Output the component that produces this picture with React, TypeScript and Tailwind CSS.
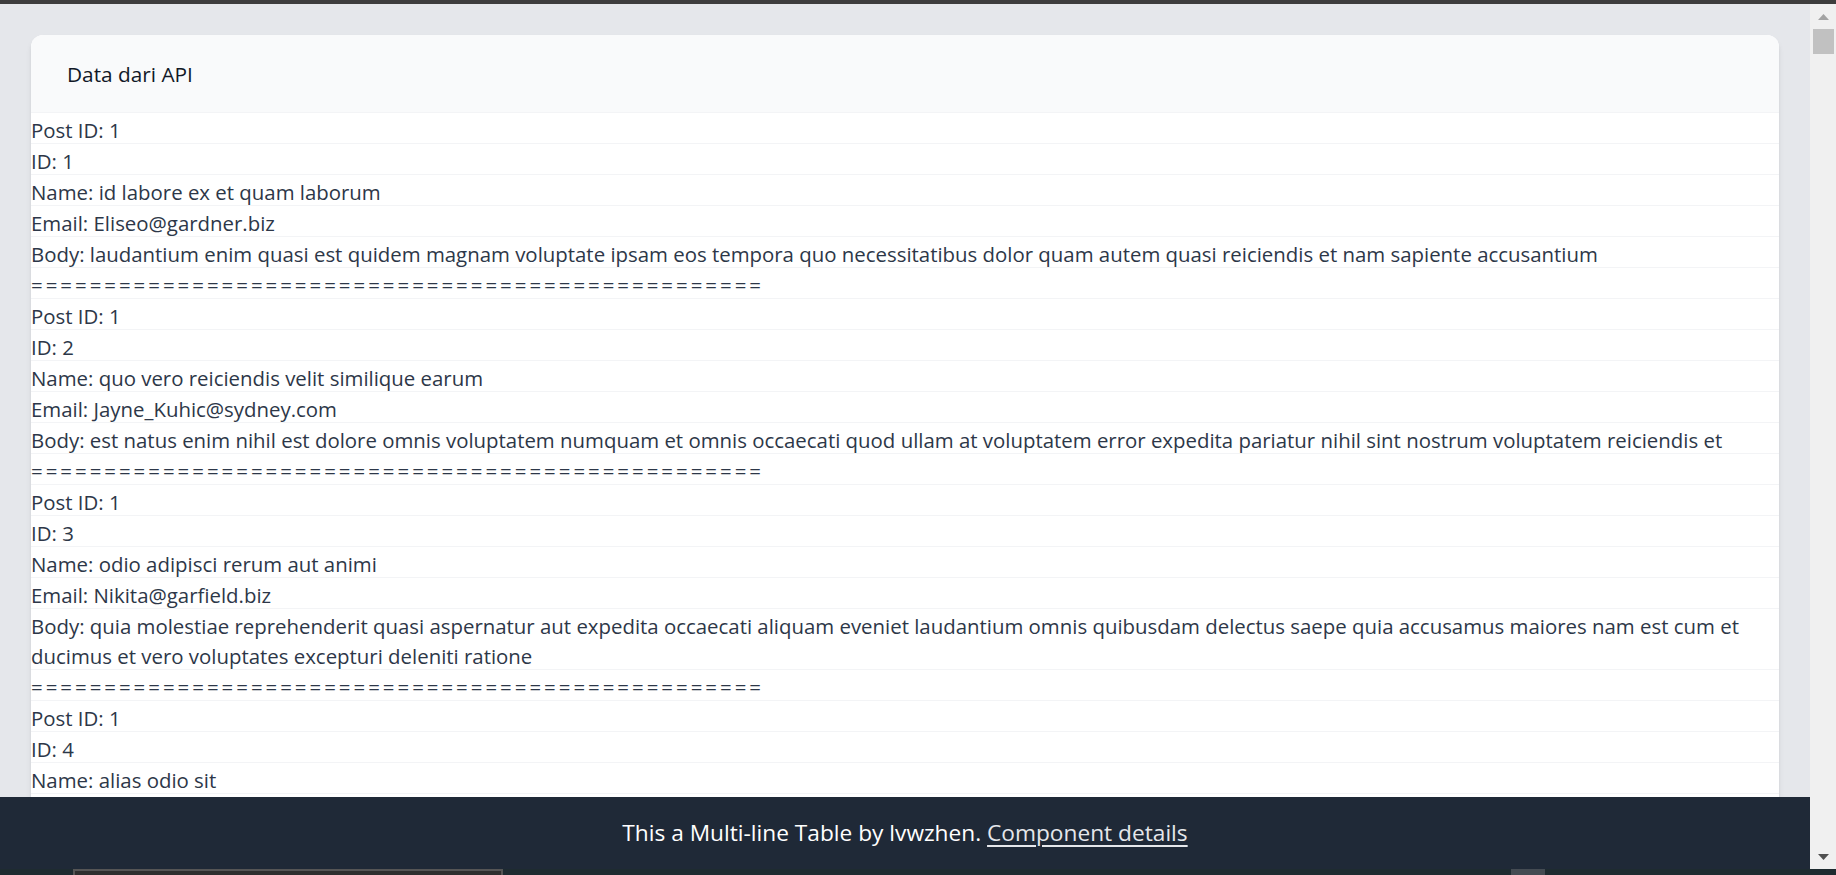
import React from "react";

interface Comment {
  postId: number;
  id: number;
  name: string;
  email: string;
  body: string;
}

const comments: Comment[] = [
  {
    postId: 1,
    id: 1,
    name: "id labore ex et quam laborum",
    email: "Eliseo@gardner.biz",
    body: "laudantium enim quasi est quidem magnam voluptate ipsam eos tempora quo necessitatibus dolor quam autem quasi reiciendis et nam sapiente accusantium",
  },
  {
    postId: 1,
    id: 2,
    name: "quo vero reiciendis velit similique earum",
    email: "Jayne_Kuhic@sydney.com",
    body: "est natus enim nihil est dolore omnis voluptatem numquam et omnis occaecati quod ullam at voluptatem error expedita pariatur nihil sint nostrum voluptatem reiciendis et",
  },
  {
    postId: 1,
    id: 3,
    name: "odio adipisci rerum aut animi",
    email: "Nikita@garfield.biz",
    body: "quia molestiae reprehenderit quasi aspernatur aut expedita occaecati aliquam eveniet laudantium omnis quibusdam delectus saepe quia accusamus maiores nam est cum et ducimus et vero voluptates excepturi deleniti ratione",
  },
  {
    postId: 1,
    id: 4,
    name: "alias odio sit",
    email: "Lew@alysha.tv",
    body: "non et atque occaecati deserunt quas accusantium unde odit nobis qui voluptatem quia voluptas consequuntur itaque dolor et qui rerum deleniti ut occaecati",
  },
  {
    postId: 1,
    id: 5,
    name: "vero eaque aliquid doloribus et culpa",
    email: "Hayden@althea.biz",
    body: "harum non quasi et ratione tempore iure ex voluptates in ratione harum architecto fugit inventore cupiditate voluptates magni quo et",
  },
];

const SEPARATOR = "=".repeat(50);

const Row = ({ children }: { children: React.ReactNode }) => (
  <div className="border-b border-[#f3f4f6] text-[20.4px] leading-[30px] text-[#2d3748]">
    <div className="translate-y-[2px]">{children}</div>
  </div>
);

const Scrollbar = () => (
  <div className="flex w-[26px] flex-col items-center bg-[#f0f0f0]">
    <div className="flex h-[25px] w-full items-center justify-center">
      <svg width="11" height="6" viewBox="0 0 11 6">
        <path d="M5.5 0 L11 6 L0 6 Z" fill="#a3a3a3" />
      </svg>
    </div>
    <div className="h-[25px] w-[21px] bg-[#c1c1c1]" />
    <div className="flex-1" />
    <div className="flex h-[25px] w-full items-center justify-center">
      <svg width="11" height="6" viewBox="0 0 11 6">
        <path d="M0 0 L11 0 L5.5 6 Z" fill="#505050" />
      </svg>
    </div>
  </div>
);

export default function App() {
  return (
    <div
      className="flex h-[875px] w-full flex-col overflow-hidden bg-[#e5e7eb]"
      style={{ fontFamily: '"Open Sans", "Noto Sans", sans-serif' }}
    >
      <div className="h-[4px] bg-[#3d3d3d]" />

      <div className="flex min-h-0 flex-1">
        <div className="flex min-w-0 flex-1 flex-col">
          {/* table area, scrolled to the top */}
          <main className="min-h-0 flex-1 overflow-hidden px-[31px] pt-[31px]">
            <div className="rounded-t-xl bg-white shadow-md">
              <div className="flex h-[78px] items-center rounded-t-xl border-b border-[#f3f4f6] bg-[#f9fafb] pl-[36px] pt-[2px]">
                <h2 className="text-[20.8px] font-medium text-[#111827]">Data dari API</h2>
              </div>
              {comments.map((c) => (
                <div key={c.id}>
                  <Row>Post ID: {c.postId}</Row>
                  <Row>ID: {c.id}</Row>
                  <Row>Name: {c.name}</Row>
                  <Row>Email: {c.email}</Row>
                  <Row>Body: {c.body}</Row>
                  <Row>
                    <span className="tracking-[3px]">{SEPARATOR}</span>
                  </Row>
                </div>
              ))}
            </div>
          </main>

          <footer className="flex h-[72px] items-center justify-center bg-[#1f2937] text-[22.7px] text-white">
            <p>
              This a Multi-line Table by lvwzhen.{" "}
              <a href="#" className="text-[#e5e7eb] underline underline-offset-4">
                Component details
              </a>
            </p>
          </footer>
        </div>

        <Scrollbar />
      </div>

      <div className="flex h-[6px] bg-[#1e2b30]">
        <div className="ml-[73px] h-full w-[430px] border-x-2 border-t-2 border-[#555555] bg-[#2e2e2e]" />
        <div className="ml-[1008px] h-full w-[34px] bg-[#444b52]" />
      </div>
    </div>
  );
}
